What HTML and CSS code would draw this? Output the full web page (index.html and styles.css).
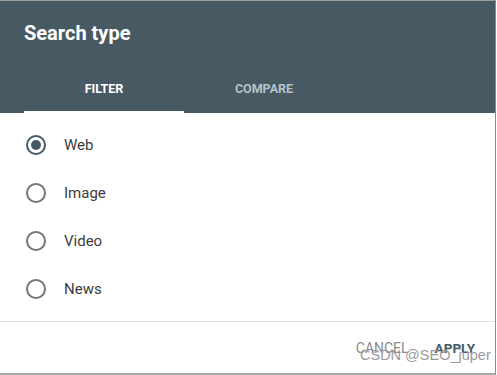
FILE: index.html
```html
<!DOCTYPE html>
<html lang="en">
<head>
    <meta charset="UTF-8">
    <title>Search type</title>
    <link rel="stylesheet" href="styles.css">
</head>
<body>
    <div class="dialog">
        <div class="dialog-header">
            <h2 class="dialog-title">Search type</h2>
            <div class="tabs">
                <div class="tab tab-active">FILTER</div>
                <div class="tab">COMPARE</div>
            </div>
        </div>

        <div class="options">
            <label class="option">
                <span class="radio radio-checked"></span>
                <span class="option-label">Web</span>
            </label>
            <label class="option">
                <span class="radio"></span>
                <span class="option-label">Image</span>
            </label>
            <label class="option">
                <span class="radio"></span>
                <span class="option-label">Video</span>
            </label>
            <label class="option">
                <span class="radio"></span>
                <span class="option-label">News</span>
            </label>
        </div>

        <div class="dialog-footer">
            <button class="btn btn-cancel">CANCEL</button>
            <button class="btn btn-apply">APPLY</button>
        </div>

        <div class="watermark">CSDN @SEO_juper</div>
    </div>
</body>
</html>
```

FILE: styles.css
```css
body {
    margin: 0;
    padding: 0;
    background-color: #fff;
    font-family: Roboto, 'Liberation Sans', sans-serif;
}

.dialog {
    position: relative;
    width: 495px;
    height: 372px;
    border-top: 1px solid #9e9e9e;
    border-right: 1px solid #8a8a8a;
    border-bottom: 2px solid #a8a8a8;
    background-color: #fff;
    box-sizing: content-box;
}

.dialog-header {
    background-color: #475a63;
    height: 112px;
    padding: 0 24px;
    display: flex;
    flex-direction: column;
}

.dialog-title {
    margin: 0;
    padding-top: 20px;
    font-size: 20px;
    font-weight: 700;
    color: #fff;
    line-height: 24px;
}

.tabs {
    display: flex;
    margin-top: auto;
}

.tab {
    width: 160px;
    height: 48px;
    box-sizing: border-box;
    padding-top: 16px;
    text-align: center;
    font-size: 12.5px;
    font-weight: 700;
    color: #b6c2c8;
}

.tab-active {
    color: #fff;
    border-bottom: 2px solid #fff;
}

.options {
    padding-top: 8px;
    height: 200px;
}

.option {
    display: flex;
    align-items: center;
    height: 48px;
    padding-left: 26px;
}

.radio {
    width: 20px;
    height: 20px;
    box-sizing: border-box;
    border: 2px solid #737373;
    border-radius: 50%;
    display: flex;
    align-items: center;
    justify-content: center;
}

.radio-checked {
    border-color: #455a64;
}

.radio-checked::after {
    content: '';
    width: 10px;
    height: 10px;
    border-radius: 50%;
    background-color: #455a64;
}

.option-label {
    margin-left: 18px;
    font-size: 15px;
    color: #3c3c3c;
}

.dialog-footer {
    border-top: 1px solid #e0e0e0;
    display: flex;
    justify-content: flex-end;
    align-items: baseline;
    padding: 18px 14px 0 0;
}

.btn {
    background: none;
    border: none;
    padding: 0 6px;
    margin-left: 16px;
    font-family: Roboto, sans-serif;
    cursor: pointer;
}

.btn-cancel {
    color: #8a8a8a;
    font-size: 14px;
    font-weight: 400;
}

.btn-apply {
    color: #455a64;
    font-size: 13.5px;
    font-weight: 700;
    margin-left: 14px;
}

.watermark {
    position: absolute;
    left: 360px;
    top: 346px;
    font-family: 'Liberation Sans', Arial, sans-serif;
    font-size: 14.5px;
    color: #9a9a9a;
}
```
